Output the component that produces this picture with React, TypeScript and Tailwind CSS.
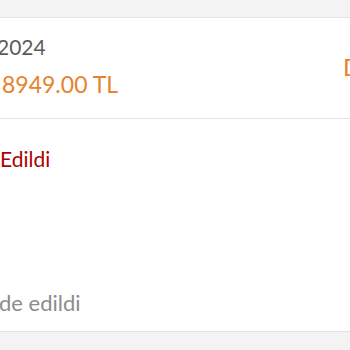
export default function App() {
  return (
    <div className="w-[350px] h-[350px] overflow-hidden bg-[#f3f3f3] font-['Lato','Liberation_Sans',sans-serif]">
      <div className="h-[17px]" />
      <div className="border-t border-[#e3e3e3] bg-white">
        <div className="flex pt-[16px] pb-[20px]">
          <div className="w-[343px] shrink-0">
            <div className="-ml-[3px] text-[21px] leading-[25px] text-[#5c5c5c] whitespace-nowrap">2024</div>
            <div className="mt-[11px] ml-[2px] text-[23px] leading-[28px] text-[#e8822e] whitespace-nowrap">8949.00 TL</div>
          </div>
          <span className="self-center shrink-0 text-[24px] leading-[29px] text-[#e8822e] whitespace-nowrap">Detay</span>
        </div>
        <div className="border-t border-[#e3e3e3] h-[213px] pt-[27px]">
          <div className="text-[21px] leading-[25px] text-[#ad0000] whitespace-nowrap">Edildi</div>
          <div className="mt-[119px] -ml-[1px] text-[22px] leading-[26px] text-[#8c8c8c] whitespace-nowrap">de edildi</div>
        </div>
      </div>
      <div className="border-t border-[#e3e3e3]" />
    </div>
  )
}
